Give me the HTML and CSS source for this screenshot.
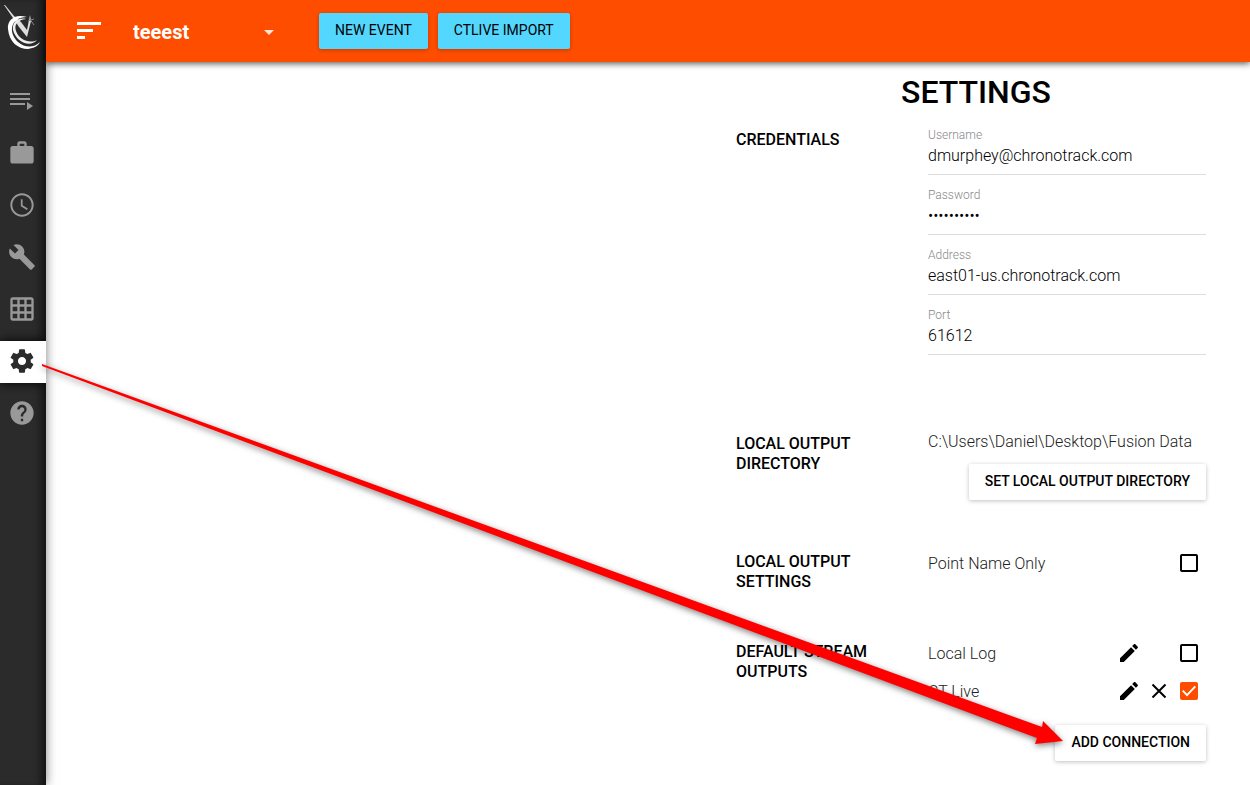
FILE: index.html
```
<!DOCTYPE html>
<html lang="en">
<head>
    <meta charset="UTF-8">
    <meta name="viewport" content="width=device-width, initial-scale=1.0">
    <title>Settings</title>
    <link rel="stylesheet" href="styles.css">
</head>
<body>
    <nav class="sidebar">
        <a href="#" class="logo" aria-label="Home">
            <svg width="46" height="56" viewBox="0 0 46 56">
                <path fill="#ddd" d="M4 5L5 5L14 16L21 22L27 30L30 15L31 21L27 37L19 27L13 18Z"/>
                <path fill="#fff" d="M27 17C14 13 7 21 8 29C9 42 18 49 28 49C34 48 38 46 40 42C34 48 25 48 18 42C8 33 10 17 27 17Z"/>
                <path fill="#eee" d="M26 19C17 17 12 23 13 30C16 42 30 48 37 40C30 44 19 40 16 31C14 25 17 20 26 19Z"/>
                <path fill="none" stroke="#888" d="M29 18L34 25M28 21L34 19"/>
            </svg>
        </a>
        <a href="#" class="nav-item" aria-label="Events">
            <svg viewBox="0 0 28 28"><path d="M2 6h20v2H2zM2 11h20v2H2zM2 16h15v2H2zM19 15v8l6-4z"/></svg>
        </a>
        <a href="#" class="nav-item" aria-label="Work">
            <svg viewBox="0 0 24 24"><path d="M20 6h-4V4c0-1.110-.890-2-2-2h-4c-1.110 0-2 .890-2 2v2H4c-1.110 0-1.990.890-1.990 2L2 19c0 1.110.890 2 2 2h16c1.110 0 2-.890 2-2V8c0-1.110-.890-2-2-2zm-6 0h-4V4h4v2z"/></svg>
        </a>
        <a href="#" class="nav-item" aria-label="Timing">
            <svg viewBox="0 0 24 24"><path d="M12 2C6.500 2 2 6.500 2 12s4.500 10 10 10 10-4.500 10-10S17.500 2 12 2zm0 18.300c-4.600 0-8.300-3.700-8.300-8.300S7.400 3.700 12 3.700s8.300 3.700 8.300 8.300-3.700 8.300-8.300 8.300zM12.500 7H11v6l5.200 3.200.8-1.300-4.500-2.700z"/></svg>
        </a>
        <a href="#" class="nav-item" aria-label="Tools">
            <svg viewBox="0 0 24 24"><path d="M22.700 19l-9.100-9.100c.9-2.300.4-5-1.500-6.900-2-2-5-2.400-7.400-1.300L9 6 6 9 1.600 4.700C.4 7.100.9 10.100 2.900 12.100c1.900 1.900 4.600 2.400 6.900 1.500l9.100 9.100c.4.4 1 .4 1.400 0l2.300-2.300c.5-.4.5-1.100.1-1.400z"/></svg>
        </a>
        <a href="#" class="nav-item" aria-label="Grid">
            <svg viewBox="0 0 24 24"><path d="M20 2H4c-1.100 0-2 .9-2 2v16c0 1.100.9 2 2 2h16c1.100 0 2-.9 2-2V4c0-1.100-.9-2-2-2zM8 20H4v-4h4v4zm0-6H4v-4h4v4zm0-6H4V4h4v4zm6 12h-4v-4h4v4zm0-6h-4v-4h4v4zm0-6h-4V4h4v4zm6 12h-4v-4h4v4zm0-6h-4v-4h4v4zm0-6h-4V4h4v4z"/></svg>
        </a>
        <a href="#" class="nav-item active" aria-label="Settings">
            <svg viewBox="0 0 24 24"><path d="M19.430 12.980c.04-.32.07-.64.07-.98s-.03-.66-.07-.98l2.110-1.650c.19-.15.24-.42.12-.64l-2-3.460c-.12-.22-.39-.3-.61-.22l-2.490 1c-.52-.4-1.080-.73-1.690-.98l-.38-2.650C14.460 2.180 14.250 2 14 2h-4c-.25 0-.46.18-.49.42l-.38 2.650c-.61.25-1.170.59-1.690.98l-2.490-1c-.23-.09-.49 0-.61.22l-2 3.460c-.13.22-.07.49.12.64l2.110 1.650c-.04.32-.07.65-.07.98s.03.66.07.98l-2.110 1.650c-.19.15-.24.42-.12.64l2 3.460c.12.22.39.3.61.22l2.490-1c.52.4 1.080.73 1.690.98l.38 2.650c.03.24.24.42.49.42h4c.25 0 .46-.18.49-.42l.38-2.650c.61-.25 1.170-.59 1.690-.98l2.490 1c.23.09.49 0 .61-.22l2-3.460c.12-.22.07-.49-.12-.64l-2.110-1.650zM12 15.500c-1.930 0-3.500-1.570-3.500-3.500s1.570-3.500 3.500-3.500 3.500 1.570 3.500 3.500-1.570 3.500-3.500 3.500z"/></svg>
        </a>
        <a href="#" class="nav-item" aria-label="Help">
            <svg viewBox="0 0 24 24"><path d="M12 2C6.480 2 2 6.480 2 12s4.480 10 10 10 10-4.480 10-10S17.520 2 12 2zm1 17h-2v-2h2v2zm2.070-7.750l-.9.920C13.450 12.900 13 13.500 13 15h-2v-.5c0-1.100.45-2.100 1.170-2.830l1.240-1.260c.37-.36.59-.86.59-1.410 0-1.100-.9-2-2-2s-2 .9-2 2H8c0-2.210 1.790-4 4-4s4 1.790 4 4c0 .88-.36 1.680-.93 2.250z"/></svg>
        </a>
    </nav>

    <div class="page">
        <header class="topbar">
            <button type="button" class="icon-btn menu-btn" aria-label="Menu">
                <svg width="24" height="18" viewBox="0 0 24 18"><path fill="#fff" d="M0 0h24v3H0zM0 7h16v3H0zM0 14h8v3H0z"/></svg>
            </button>
            <div class="event-select">
                <select aria-label="Event">
                    <option>teeest</option>
                </select>
                <svg width="10" height="5" viewBox="0 0 10 5"><path fill="#ffe4d9" d="M0 0h10L5 5z"/></svg>
            </div>
            <button type="button" class="btn btn-blue">NEW EVENT</button>
            <button type="button" class="btn btn-blue">CTLIVE IMPORT</button>
        </header>

        <main class="settings">
            <h1>SETTINGS</h1>

            <section class="group credentials">
                <h2>CREDENTIALS</h2>
                <form>
                    <div class="field">
                        <label for="username">Username</label>
                        <input type="text" id="username" value="dmurphey@chronotrack.com">
                    </div>
                    <div class="field">
                        <label for="password">Password</label>
                        <input type="password" id="password" value="chronotrac">
                    </div>
                    <div class="field">
                        <label for="address">Address</label>
                        <input type="text" id="address" value="east01-us.chronotrack.com">
                    </div>
                    <div class="field">
                        <label for="port">Port</label>
                        <input type="text" id="port" value="61612">
                    </div>
                </form>
            </section>

            <section class="group directory">
                <h2>LOCAL OUTPUT DIRECTORY</h2>
                <div class="group-body">
                    <p>C:\Users\Daniel\Desktop\Fusion Data</p>
                    <button type="button" class="btn">SET LOCAL OUTPUT DIRECTORY</button>
                </div>
            </section>

            <section class="group output">
                <h2>LOCAL OUTPUT SETTINGS</h2>
                <div class="group-body">
                    <div class="row">
                        <label for="point">Point Name Only</label>
                        <input type="checkbox" id="point">
                    </div>
                </div>
            </section>

            <section class="group streams">
                <h2>DEFAULT STREAM OUTPUTS</h2>
                <div class="group-body">
                    <div class="row">
                        <label for="log">Local Log</label>
                        <button type="button" class="icon-btn edit-log" aria-label="Edit Local Log">
                            <svg width="24" height="24" viewBox="0 0 24 24"><path d="M3 17.250V21h3.750L17.810 9.940l-3.750-3.750L3 17.250zM20.710 7.040c.39-.39.39-1.020 0-1.410l-2.340-2.340c-.39-.39-1.020-.39-1.410 0l-1.830 1.830 3.750 3.750 1.830-1.830z"/></svg>
                        </button>
                        <input type="checkbox" id="log">
                    </div>
                    <div class="row">
                        <label for="live">CT Live</label>
                        <button type="button" class="icon-btn" aria-label="Edit CT Live">
                            <svg width="24" height="24" viewBox="0 0 24 24"><path d="M3 17.250V21h3.750L17.810 9.940l-3.750-3.750L3 17.250zM20.710 7.040c.39-.39.39-1.020 0-1.410l-2.340-2.340c-.39-.39-1.020-.39-1.410 0l-1.830 1.830 3.750 3.750 1.830-1.830z"/></svg>
                        </button>
                        <button type="button" class="icon-btn" aria-label="Remove CT Live">
                            <svg width="24" height="24" viewBox="0 0 24 24"><path fill="none" stroke="#000" stroke-width="2" d="M5.500 5.500l13 13M18.500 5.500l-13 13"/></svg>
                        </button>
                        <input type="checkbox" id="live" checked>
                    </div>
                    <button type="button" class="btn">ADD CONNECTION</button>
                </div>
            </section>
        </main>
    </div>

    <!-- arrow from the settings tab to the add button -->
    <svg class="pointer" width="1040" height="400" viewBox="0 0 1040 400">
        <path fill="#f00" d="M2 4L1002 367L1003 361L1023 381L995 384L997 378L2 6Z"/>
    </svg>
</body>
</html>
```

FILE: styles.css
```
* {
    box-sizing: border-box;
}
body {
    margin: 0;
    min-height: 100vh;
    display: flex;
    position: relative;
    overflow-x: hidden;
    background-color: #fff;
    color: #000;
    font-family: Roboto, "Liberation Sans", sans-serif;
    font-size: 16px;
    font-weight: 300;
}
h1, h2, p {
    margin: 0;
}
button, input, select {
    font-family: inherit;
    color: inherit;
}

/* Sidebar */
.sidebar {
    flex: none;
    width: 46px;
    display: flex;
    flex-direction: column;
    gap: 10px;
    background-color: #2b2b2b;
    box-shadow: inset -8px 0 8px -4px #111, 0 0 10px rgba(0, 0, 0, 0.5);
    z-index: 2;
}
.logo {
    height: 71px;
}
.nav-item {
    height: 42px;
    padding: 0 2px 2px 0;
    display: flex;
    align-items: center;
    justify-content: center;
}
.nav-item svg {
    width: 28px;
    height: 28px;
    fill: #999;
}
.nav-item.active {
    background-color: #fff;
    box-shadow: 0 0 10px #000;
    clip-path: inset(-12px 0);
}
.nav-item.active svg {
    fill: #2b2b2b;
}

/* Top bar */
.page {
    flex: 1;
    min-width: 0;
}
.topbar {
    height: 62px;
    padding-left: 31px;
    display: flex;
    align-items: center;
    gap: 10px;
    background-color: #ff4d00;
    box-shadow: 0 2px 6px rgba(0, 0, 0, 0.6);
    position: relative;
    z-index: 3;
}
.icon-btn {
    padding: 0;
    display: flex;
    border: none;
    background: none;
    cursor: pointer;
}
.menu-btn {
    margin-right: 22px;
}
.event-select {
    width: 141px;
    margin-right: 35px;
    display: grid;
    align-items: center;
}
.event-select select,
.event-select svg {
    grid-area: 1 / 1;
}
.event-select svg {
    justify-self: end;
    pointer-events: none;
    margin-top: 3px;
}
.event-select select {
    appearance: none;
    width: 100%;
    padding: 2px 0 0;
    border: none;
    background: none;
    color: #fff;
    font-size: 20px;
    font-weight: 700;
}
.btn {
    height: 36px;
    padding: 0 16px 2px;
    border: none;
    border-radius: 2px;
    background-color: #fff;
    box-shadow: 0 1px 4px rgba(0, 0, 0, 0.25);
    font-size: 14px;
    font-weight: 500;
    cursor: pointer;
}
.btn-blue {
    background-color: #53d7ff;
    font-weight: 400;
}

/* Settings */
.settings {
    width: 480px;
    max-width: 100%;
    margin: 0 34px 0 auto;
    padding-top: 10px;
}
h1 {
    font-size: 32px;
    font-weight: 500;
    line-height: 40px;
    text-align: center;
}
.group {
    padding-right: 10px;
    display: grid;
    grid-template-columns: 192px 1fr;
}
h2 {
    max-width: 150px;
    padding-top: 2px;
    font-size: 16px;
    font-weight: 500;
    line-height: 20px;
}
.credentials {
    margin-top: 16px;
}
.directory {
    margin-top: 64px;
}
.output {
    margin-top: 50px;
}
.streams {
    margin-top: 48px;
}
.field {
    height: 60px;
    display: flex;
    flex-direction: column;
}
.field label {
    color: #888;
    font-size: 12px;
    line-height: 14px;
}
.field input {
    height: 26px;
    padding: 0;
    border: none;
    outline: none;
    background: none;
    font-size: 16px;
    font-weight: 300;
}
.field::after {
    content: "";
    margin-top: 6px;
    border-bottom: 1px solid #ddd;
}
.group-body {
    display: flex;
    flex-direction: column;
    align-items: flex-end;
}
.group-body p {
    width: 100%;
    color: #222;
    line-height: 20px;
}
.directory .btn {
    margin-top: 12px;
}
.streams .btn {
    margin-top: 21px;
}
.row {
    width: 100%;
    height: 26px;
    padding-right: 8px;
    display: flex;
    align-items: center;
    gap: 6px;
}
.row + .row {
    margin-top: 12px;
}
.row label {
    flex: 1;
    color: #222;
}
.edit-log {
    margin-right: 30px;
}
input[type="checkbox"] {
    appearance: none;
    width: 18px;
    height: 18px;
    margin: 0 0 0 3px;
    display: grid;
    place-items: center;
    border: 2px solid #000;
    border-radius: 2px;
}
input[type="checkbox"]:checked {
    border-color: #ff4d00;
    background-color: #ff4d00;
}
input[type="checkbox"]:checked::before {
    content: "";
    width: 14px;
    height: 12px;
    background-color: #fff;
    clip-path: polygon(0 52%, 10% 42%, 36% 72%, 90% 6%, 100% 16%, 36% 96%);
}

.pointer {
    position: absolute;
    top: 360px;
    left: 40px;
    z-index: 4;
    overflow: visible;
    pointer-events: none;
    filter: drop-shadow(0 2px 3px rgba(0, 0, 0, 0.5));
}
```
